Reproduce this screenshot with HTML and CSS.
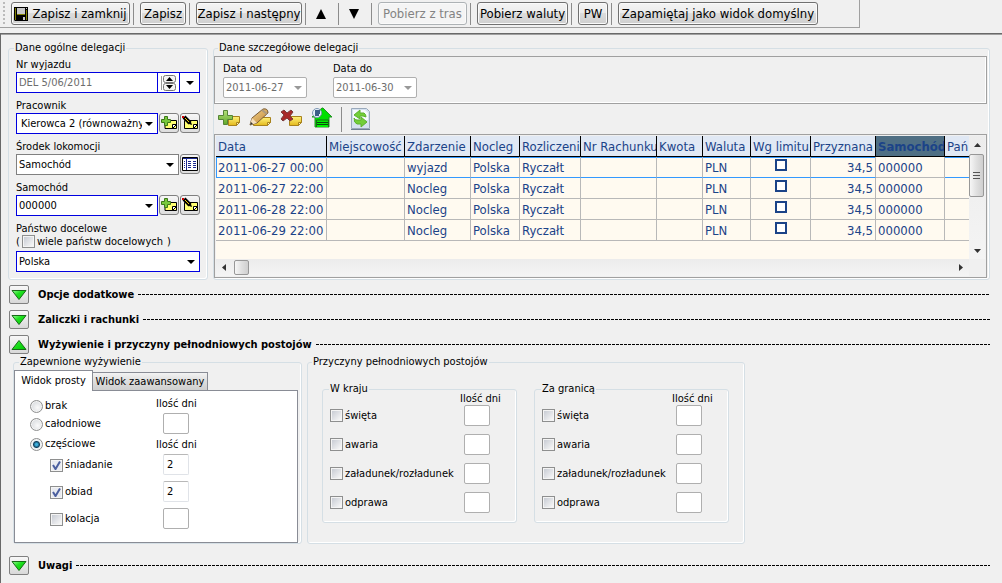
FILE: index.html
```html
<!DOCTYPE html>
<html lang="pl">
<head>
<meta charset="utf-8">
<title>Delegacja</title>
<link rel="stylesheet" href="styles.css">
</head>
<body>
<svg class="defs" width="0" height="0" aria-hidden="true">
  <defs>
    <linearGradient id="gold" x1="0" y1="0" x2="0" y2="1"><stop offset="0" stop-color="#fff27a"/><stop offset="1" stop-color="#e3b81c"/></linearGradient>
    <linearGradient id="lime" x1="0" y1="0" x2="0" y2="1"><stop offset="0" stop-color="#b4e07a"/><stop offset="1" stop-color="#5fa828"/></linearGradient>
    <linearGradient id="wood" x1="0" y1="0" x2="1" y2="1"><stop offset="0" stop-color="#f6d58e"/><stop offset="1" stop-color="#bd8434"/></linearGradient>
    <linearGradient id="green" x1="0" y1="0" x2="1" y2="1"><stop offset="0" stop-color="#9f9"/><stop offset=".4" stop-color="#1fe01f"/><stop offset="1" stop-color="#00c800"/></linearGradient>
    <symbol id="note-add" viewBox="0 0 16 16"><path d="M4 5.500h11.500v8H4z" fill="#ffff70" stroke="#000"/><path d="M11.500 13.500v-4h4z" fill="#fff" stroke="#000"/><path d="M12 13l3-3" stroke="#000"/><path d="M3.500 1.500h3v3h3v3h-3v3h-3v-3h-3v-3h3z" fill="#78c83c" stroke="#3c7818"/></symbol>
    <symbol id="note-edit" viewBox="0 0 16 16"><path d="M2.500 5.500h13v8h-13z" fill="#ffff70" stroke="#000"/><path d="M11.500 13.500v-4h4z" fill="#fff" stroke="#000"/><path d="M12 13l3-3" stroke="#000"/><path d="m2 2 6 6" stroke="#000" stroke-width="4"/><path d="m3 3 4 4" stroke="#f4d000"/><path d="M0 1h2v2H0z" fill="#d00000"/><path d="M10 10 5.500 8.500 8.500 5.500z" fill="#000"/></symbol>
    <symbol id="down" viewBox="0 0 16 12"><path d="M1 1.500h14L8 10.500z" fill="url(#green)" stroke="#176a17"/></symbol>
    <symbol id="up" viewBox="0 0 16 12"><path d="M1 10.500h14L8 1.500z" fill="url(#green)" stroke="#176a17"/></symbol>
  </defs>
</svg>

<header class="toolbar">
  <span class="grip"></span>
  <button class="btn btn-save" type="button"><svg width="14" height="14" viewBox="0 0 14 14"><path d="M0 0h14v14H1L0 13z" fill="#000"/><path d="M1 1h1v12H1zM12 3h1v10h-1zM3 7h8v1H3z" fill="#808000"/><path d="M3 1h8v6H3zM12 1h1v1h-1z" fill="#c8c8c8"/><path d="M9 10h2v3H9z" fill="#c8c8c8"/></svg>Zapisz i zamknij</button>
  <span class="sep"></span>
  <button class="btn" type="button">Zapisz</button>
  <span class="sep"></span>
  <button class="btn btn-next" type="button">Zapisz i następny</button>
  <span class="sep"></span>
  <button class="arrow" type="button" aria-label="Poprzedni"><svg width="10" height="10" viewBox="0 0 10 10"><path d="M5 0 10 10H0z"/></svg></button>
  <span class="sep"></span>
  <button class="arrow" type="button" aria-label="Następna"><svg width="10" height="10" viewBox="0 0 10 10"><path d="M0 0h10L5 10z"/></svg></button>
  <span class="sep"></span>
  <button class="btn btn-routes" type="button" disabled>Pobierz z tras</button>
  <span class="sep"></span>
  <button class="btn btn-rates" type="button">Pobierz waluty</button>
  <span class="sep"></span>
  <button class="btn btn-pw" type="button">PW</button>
  <span class="sep"></span>
  <button class="btn btn-view" type="button">Zapamiętaj jako widok domyślny</button>
</header>

<main class="main">
  <div class="top">
    <fieldset class="group general">
      <legend>Dane ogólne delegacji</legend>
      <div class="field">
        <label for="nr">Nr wyjazdu</label>
        <div class="line joined">
          <input class="box blue number" id="nr" value="DEL 5/06/2011" readonly>
          <button class="spin" type="button" aria-label="Zmień numer"><svg width="15" height="16" viewBox="0 0 15 16"><path d="M.5 1v14" stroke="#999"/><rect x="2.500" y=".5" width="12" height="7" rx="2" fill="#f4f4f4" stroke="#777"/><rect x="2.500" y="8.500" width="12" height="7" rx="2" fill="#f4f4f4" stroke="#777"/><path d="M8.500 2 12 6H5zM8.500 14 5 10h7z"/></svg></button>
          <button class="drop" type="button" aria-label="Rozwiń"><svg width="8" height="4" viewBox="0 0 8 4"><path d="M0 0h8L4 4z"/></svg></button>
        </div>
      </div>
      <div class="field">
        <label for="worker">Pracownik</label>
        <div class="line">
          <select class="box blue indent" id="worker"><option>Kierowca 2 (równoważny)</option></select>
          <button class="tool" type="button" aria-label="Dodaj pracownika"><svg width="16" height="16"><use href="#note-add"/></svg></button>
          <button class="tool" type="button" aria-label="Edytuj pracownika"><svg width="16" height="16"><use href="#note-edit"/></svg></button>
        </div>
      </div>
      <div class="field">
        <label for="transport">Środek lokomocji</label>
        <div class="line">
          <select class="box" id="transport"><option>Samochód</option></select>
          <button class="tool" type="button" aria-label="Lista"><svg width="16" height="14" viewBox="0 0 16 14"><path d="M.5.500h15v13H.5z" fill="#fff" stroke="#000"/><path d="M1 1h14v1H1z" fill="#1c2a90"/><path d="M4.500 2v11" stroke="#1c2a90"/><path d="M2 4.500h1M2 6.500h1M2 8.500h1M2 10.500h1M6 4.500h3M6 6.500h3M6 8.500h3M6 10.500h3M11 4.500h3M11 6.500h3M11 8.500h3M11 10.500h3" stroke="#1c2a90"/></svg></button>
        </div>
      </div>
      <div class="field">
        <label for="car">Samochód</label>
        <div class="line">
          <select class="box blue" id="car"><option>000000</option></select>
          <button class="tool" type="button" aria-label="Dodaj samochód"><svg width="16" height="16"><use href="#note-add"/></svg></button>
          <button class="tool" type="button" aria-label="Edytuj samochód"><svg width="16" height="16"><use href="#note-edit"/></svg></button>
        </div>
      </div>
      <div class="field">
        <label for="country">Państwo docelowe</label>
        <div class="many">(<label class="check"><input type="checkbox">wiele państw docelowych</label><span class="paren">)</span></div>
        <div class="line"><select class="box blue" id="country"><option>Polska</option></select></div>
      </div>
    </fieldset>

    <fieldset class="group details">
      <legend>Dane szczegółowe delegacji</legend>
      <div class="dates">
        <div class="date"><label for="from">Data od</label><select class="box" id="from" disabled><option>2011-06-27</option></select></div>
        <div class="date"><label for="to">Data do</label><select class="box" id="to" disabled><option>2011-06-30</option></select></div>
      </div>
      <div class="actions">
        <button type="button" aria-label="Dodaj"><svg width="24" height="24" viewBox="0 0 24 24"><path d="M11.500 9.500h11v6l-3 3h-8z" fill="url(#gold)" stroke="#a8821c"/><path d="M19.500 18.500v-3h3z" fill="#fff8b0" stroke="#a8821c"/><path d="M6.500 3.500h4v5h5v4h-5v5h-4v-5h-5v-4h5z" fill="url(#lime)" stroke="#558436"/></svg></button>
        <button type="button" aria-label="Edytuj"><svg width="24" height="24" viewBox="0 0 24 24"><path d="M5.500 10.500h17v5l-3 3h-14z" fill="url(#gold)" stroke="#a8821c"/><path d="M19.500 18.500v-3h3z" fill="#fff8b0" stroke="#a8821c"/><path d="m2 18 2-7L15 2q5-1 5 4L9 16z" fill="url(#wood)" stroke="#795b35"/><path d="m4 11 5 5-7 2z" fill="#f5dfbd"/><path d="m14 3 5 4" stroke="#ad9a7e" stroke-width="2"/><path d="m2 18 1-3 2 2z" fill="#333"/></svg></button>
        <button type="button" aria-label="Usuń"><svg width="24" height="24" viewBox="0 0 24 24"><path d="M10.500 9.500h12v6l-3 3h-9z" fill="url(#gold)" stroke="#a8821c"/><path d="M19.500 18.500v-3h3z" fill="#fff8b0" stroke="#a8821c"/><path d="m2 5 3-2 3 3 4-3 2 2-3 4 3 3-3 2-3-3-4 3-2-2 3-4z" fill="#a82a2a" stroke="#7b3b3b"/></svg></button>
        <button type="button" aria-label="Baza"><svg width="24" height="24" viewBox="0 0 24 24"><path d="M12 1h1l9 9h-3v10H5V10H2z" fill="#00df00" stroke="#249124"/><path d="M6.500 20v-7h12v7" fill="#00f000" stroke="#176c17"/><path d="M7 15.500h11M7 17.500h11" stroke="#08480e"/><circle cx="7" cy="6" r="4.500" fill="#e8f2fa" stroke="#7e96b3"/><path d="M5 4h4v2H6v2h3" fill="none" stroke="#3b5e86" stroke-width="2"/></svg></button>
        <span class="divider"></span>
        <button type="button" aria-label="Odśwież"><svg width="24" height="24" viewBox="0 0 24 24"><path d="M2.500 1.500h15l3 3v17h-18z" fill="#d6e2f0" stroke="#9aa9bb"/><path d="M4 3h12l3 3v7H4z" fill="#f7faff"/><path d="M2 22.500h19" stroke="#6f7f92"/><path d="m5 8 6-5v3h4q2 1 2 4l-3-1h-3v3z" fill="#73cf39" stroke="#5cb030"/><path d="m18 15-6-5v3H8q-2 0-3-2 0 5 3 6h4v3z" fill="#73cf39" stroke="#5cb030"/></svg></button>
      </div>
      <div class="grid">
        <div class="viewport">
          <table>
            <colgroup><col class="c1"><col class="c2"><col class="c3"><col class="c4"><col class="c5"><col class="c6"><col class="c7"><col class="c8"><col class="c9"><col class="c10"><col class="c11"><col class="c12"></colgroup>
            <thead><tr><th>Data</th><th>Miejscowość</th><th>Zdarzenie</th><th>Nocleg</th><th>Rozliczenie</th><th>Nr Rachunku</th><th>Kwota</th><th>Waluta</th><th>Wg limitu</th><th>Przyznana</th><th class="sorted">Samochód</th><th>Pań</th></tr></thead>
            <tbody>
              <tr class="current"><td>2011-06-27 00:00</td><td></td><td>wyjazd</td><td>Polska</td><td>Ryczałt</td><td></td><td></td><td>PLN</td><td class="tick"><input type="checkbox" aria-label="Wg limitu"></td><td class="num">34,5</td><td class="car">000000</td><td></td></tr>
              <tr><td>2011-06-27 22:00</td><td></td><td>Nocleg</td><td>Polska</td><td>Ryczałt</td><td></td><td></td><td>PLN</td><td class="tick"><input type="checkbox" aria-label="Wg limitu"></td><td class="num">34,5</td><td>000000</td><td></td></tr>
              <tr><td>2011-06-28 22:00</td><td></td><td>Nocleg</td><td>Polska</td><td>Ryczałt</td><td></td><td></td><td>PLN</td><td class="tick"><input type="checkbox" aria-label="Wg limitu"></td><td class="num">34,5</td><td>000000</td><td></td></tr>
              <tr><td>2011-06-29 22:00</td><td></td><td>Nocleg</td><td>Polska</td><td>Ryczałt</td><td></td><td></td><td>PLN</td><td class="tick"><input type="checkbox" aria-label="Wg limitu"></td><td class="num">34,5</td><td>000000</td><td></td></tr>
            </tbody>
          </table>
        </div>
        <div class="vbar">
          <button type="button" aria-label="W górę"><svg width="7" height="4" viewBox="0 0 7 4"><path d="M3.500 0 7 4H0z" fill="#333"/></svg></button>
          <span class="thumb"><svg width="8" height="9" viewBox="0 0 8 9"><path d="M0 1.500h7M0 4.500h7M0 7.500h7" stroke="#555"/></svg></span>
          <button class="last" type="button" aria-label="W dół"><svg width="7" height="4" viewBox="0 0 7 4"><path d="M0 0h7L3.500 4z" fill="#333"/></svg></button>
        </div>
        <div class="hbar">
          <button type="button" aria-label="W lewo"><svg width="4" height="7" viewBox="0 0 4 7"><path d="M4 0v7L0 3.500z" fill="#333"/></svg></button>
          <span class="thumb"></span>
          <button class="last" type="button" aria-label="W prawo"><svg width="4" height="7" viewBox="0 0 4 7"><path d="M0 0v7l4-3.500z" fill="#333"/></svg></button>
        </div>
      </div>
    </fieldset>
  </div>

  <div class="sections">
    <div class="section"><button class="fold" type="button" aria-label="Rozwiń"><svg width="16" height="12"><use href="#down"/></svg></button><h2>Opcje dodatkowe</h2><span class="dashes"></span></div>
    <div class="section"><button class="fold" type="button" aria-label="Rozwiń"><svg width="16" height="12"><use href="#down"/></svg></button><h2>Zaliczki i rachunki</h2><span class="dashes"></span></div>
    <div class="section"><button class="fold" type="button" aria-label="Zwiń"><svg width="16" height="12"><use href="#up"/></svg></button><h2>Wyżywienie i przyczyny pełnodniowych postojów</h2><span class="dashes"></span></div>
  </div>

  <div class="meals">
    <fieldset class="group board">
      <legend>Zapewnione wyżywienie</legend>
      <div class="tabs"><button class="tab active" type="button">Widok prosty</button><button class="tab" type="button">Widok zaawansowany</button></div>
      <div class="pane">
        <div class="kinds">
          <label class="check"><input type="radio" name="meal">brak</label>
          <label class="check"><input type="radio" name="meal">całodniowe</label>
          <label class="check part"><input type="radio" name="meal" checked>częściowe</label>
          <label class="check sub"><input type="checkbox" checked>śniadanie</label>
          <label class="check sub"><input type="checkbox" checked>obiad</label>
          <label class="check sub"><input type="checkbox">kolacja</label>
        </div>
        <div class="days">
          <label for="full">Ilość dni</label>
          <input class="qty" id="full">
          <label for="breakfast">Ilość dni</label>
          <input class="qty live" id="breakfast" value="2">
          <input class="qty live" aria-label="Obiad" value="2">
          <input class="qty" aria-label="Kolacja">
        </div>
      </div>
    </fieldset>

    <fieldset class="group stops">
      <legend>Przyczyny pełnodniowych postojów</legend>
      <div class="places">
        <fieldset class="group place">
          <legend>W kraju</legend>
          <div class="reasons">
            <span class="caption">Ilość dni</span>
            <label class="check"><input type="checkbox">święta</label><input class="qty" aria-label="święta">
            <label class="check"><input type="checkbox">awaria</label><input class="qty" aria-label="awaria">
            <label class="check"><input type="checkbox">załadunek/rozładunek</label><input class="qty" aria-label="załadunek/rozładunek">
            <label class="check"><input type="checkbox">odprawa</label><input class="qty" aria-label="odprawa">
          </div>
        </fieldset>
        <fieldset class="group place">
          <legend>Za granicą</legend>
          <div class="reasons">
            <span class="caption">Ilość dni</span>
            <label class="check"><input type="checkbox">święta</label><input class="qty" aria-label="święta">
            <label class="check"><input type="checkbox">awaria</label><input class="qty" aria-label="awaria">
            <label class="check"><input type="checkbox">załadunek/rozładunek</label><input class="qty" aria-label="załadunek/rozładunek">
            <label class="check"><input type="checkbox">odprawa</label><input class="qty" aria-label="odprawa">
          </div>
        </fieldset>
      </div>
    </fieldset>
  </div>

  <div class="section notes"><button class="fold" type="button" aria-label="Rozwiń"><svg width="16" height="12"><use href="#down"/></svg></button><h2>Uwagi</h2><span class="dashes"></span></div>
</main>
</body>
</html>
```
FILE: styles.css
```css
* { box-sizing: border-box; }
html { overflow: hidden; }
body {
  margin: 0;
  background: #f0f0f0;
  color: #000;
  font: 11px/16px "DejaVu Sans Condensed", "DejaVu Sans", sans-serif;
}
button, input, select { font: inherit; color: inherit; margin: 0; }
button { display: inline-flex; align-items: center; justify-content: center; padding: 0; }
svg { display: block; flex: none; }
.defs { position: absolute; }

.toolbar {
  display: flex;
  align-items: center;
  width: fit-content;
  height: 28px;
  padding: 0 41px 0 3px;
  border: solid #a0a0a0;
  border-width: 0 1px 1px 0;
  font-size: 13px;
}
.grip {
  width: 2px;
  height: 23px;
  margin-right: 6px;
  background: repeating-linear-gradient(#bbb 0 2px, transparent 2px 4px);
}
.btn {
  height: 23px;
  min-width: 46px;
  white-space: nowrap;
  background: linear-gradient(#f4f4f4, #ebebeb 50%, #dcdcdc 50%, #cfcfcf);
  border: 1px solid #707070;
  border-radius: 3px;
  box-shadow: inset 0 0 0 1px #fafafa;
}
.btn:disabled { color: #838383; background: #f4f4f4; border-color: #adb2b5; }
.btn-save { width: 119px; gap: 4px; }
.btn-next { width: 106px; }
.btn-routes { width: 89px; }
.btn-rates { width: 91px; }
.btn-pw { width: 30px; min-width: 0; }
.btn-view { width: 200px; }
.sep { width: 1px; height: 22px; margin: 0 6px 0 3px; background: #8c8c8c; }
.arrow { width: 23px; height: 23px; padding-right: 5px; border: 0; background: none; }

.main {
  margin-top: 5px;
  min-height: calc(100vh - 33px);
  padding: 5px 12px 0 7px;
  border: solid #696969;
  border-width: 1px 0 0 1px;
  box-shadow: inset 0 1px #a0a0a0;
}
.group {
  min-width: 0;
  margin: 0;
  padding: 0;
  border: 1px solid #d5dfe5;
  border-radius: 3px;
  box-shadow: inset -1px -1px #fff;
}
.group legend { margin-left: 5px; padding: 0 1px; }
.top { display: grid; grid-template-columns: 200px 1fr; gap: 5px; padding-top: 1px; }

.general { padding: 0 7px 7px; }
.general legend { margin-left: -2px; }
.field { margin-bottom: 4px; }
.field:last-child { margin-bottom: 0; }
.field > label { display: block; height: 16px; padding-top: 1px; }
.line { display: flex; gap: 1px; height: 21px; }
.joined { gap: 0; }
.box {
  flex: 1;
  min-width: 0;
  height: 21px;
  padding: 0 18px 0 2px;
  border: 1px solid #808080;
  border-radius: 0;
  appearance: none;
  background: #fff url("data:image/svg+xml,%3Csvg xmlns='http://www.w3.org/2000/svg' width='8' height='4'%3E%3Cpath d='M0 0h8L4 4z'/%3E%3C/svg%3E") no-repeat right 4px center;
}
.blue { border-color: #0000e0; }
.indent { padding: 0 15px 0 4px; }
.number { background: #fff; padding-right: 2px; color: #6d6d6d; }
.spin { width: 21px; background: #fff; border: solid #0000e0; border-width: 1px 0; }
.drop { width: 21px; background: #fff; border: 1px solid #0000e0; }
.tool {
  width: 20px;
  height: 20px;
  border: 1px solid #808080;
  border-radius: 3px;
  background: linear-gradient(#f6f6f6, #ddd);
}
.many { display: flex; height: 15px; align-items: center; gap: 2px; margin-top: -2px; margin-bottom: 2px; }
.paren { margin-left: 2px; }
.check { display: flex; align-items: center; gap: 2px; white-space: nowrap; }
.check input { flex: none; width: 13px; height: 13px; appearance: none; }
.check input[type="checkbox"] {
  border: 1px solid #8e8f8f;
  background: linear-gradient(135deg, #c8ccd4, #f8f8f8) content-box, #f6f6f6;
  padding: 1px;
  box-shadow: inset 0 0 0 1px #f4f4f4;
}
.check input[type="checkbox"]:checked {
  background: url("data:image/svg+xml,%3Csvg xmlns='http://www.w3.org/2000/svg' width='11' height='11'%3E%3Cpath d='M2 5l2.500 4L9 1.500' fill='none' stroke='%234b5f9f' stroke-width='2'/%3E%3C/svg%3E") no-repeat center, #e8eaf0;
}
.check input[type="radio"] {
  border: 1px solid #8e8f8f;
  border-radius: 50%;
  background: radial-gradient(circle at 60% 60%, #fafafa, #cdd1d6);
  box-shadow: inset 0 0 0 1px #f4f4f4;
}
.check input[type="radio"]:checked { background: radial-gradient(circle, #3fb0dc 0 1px, #10405f 3px, #e8eef2 4px); }

.details { display: flex; flex-direction: column; padding: 0 2px 1px 0; }
.details legend { margin-left: 4px; }
.dates { display: flex; gap: 26px; height: 48px; padding: 4px 8px; border: 1px solid #a0a0a0; box-shadow: inset -1px -1px #fff; }
.date { display: flex; flex-direction: column; width: 84px; }
.date .box { flex: none; border-radius: 2px; }
.date .box:disabled {
  opacity: 1;
  color: #6d6d6d;
  border-color: #afafaf;
  background-image: url("data:image/svg+xml,%3Csvg xmlns='http://www.w3.org/2000/svg' width='8' height='4'%3E%3Cpath fill='%23999' d='M0 0h8L4 4z'/%3E%3C/svg%3E");
}
.actions { display: flex; align-items: center; gap: 7px; height: 30px; padding-left: 3px; }
.actions button { border: 0; background: none; }
.divider { width: 1px; height: 25px; background: #8c8c8c; }
.grid {
  flex: 1;
  display: grid;
  grid-template: 1fr 17px / minmax(0, 1fr) 16px;
  min-height: 144px;
  padding: 1px;
  border: 1px solid #a0a0a0;
  background: #f0f0f0;
}
.viewport { overflow: hidden; background: #fffaf0; }
table { width: 790px; table-layout: fixed; border-collapse: separate; border-spacing: 0; color: #1b4388; font-size: 13px; }
th, td { height: 21px; padding: 2px 2px 0; overflow: hidden; white-space: nowrap; text-align: left; font-weight: normal; line-height: 18px; border: solid #b8b8b8; border-width: 0 1px 1px 0; }
th { padding-right: 0; background: #e0e8f4; border-color: #000; }
.sorted { background: #4f6f84; font-weight: bold; }
.current td { border-bottom-color: #3399ff; box-shadow: inset 0 1px #3399ff; }
.current td:first-child { box-shadow: inset 1px 1px #3399ff; }
.current .car { box-shadow: none; border-bottom-color: #b8b8b8; }
.num { text-align: right; }
.tick { padding-top: 0; text-align: center; }
.tick input { display: block; width: 12px; height: 12px; margin: 0 auto 4px; appearance: none; border: 2px solid #1b4388; background: #fff; }
.c1 { width: 111px; } .c2 { width: 78px; } .c3 { width: 66px; } .c4 { width: 49px; }
.c5 { width: 61px; } .c6 { width: 76px; } .c7 { width: 46px; } .c8 { width: 48px; }
.c9 { width: 60px; } .c10 { width: 65px; } .c11 { width: 69px; } .c12 { width: 61px; }
.vbar, .hbar { display: flex; background: linear-gradient(#ececec, #f4f4f4); }
.vbar { flex-direction: column; }
.vbar button, .hbar button { border: 0; background: none; width: 16px; height: 17px; }
.thumb { display: flex; align-items: center; justify-content: center; width: 15px; height: 15px; margin: 1px 2px; border: 1px solid #979797; border-radius: 2px; background: linear-gradient(90deg, #f6f6f6, #e0e0e0 50%, #cfcfcf); }
.vbar .thumb { height: 43px; margin: 1px 0; }
.vbar .last { margin-top: auto; }
.hbar .last { margin-left: auto; }

.section { display: flex; align-items: center; height: 25px; }
.sections { padding-top: 2px; }
.section h2 { margin: 0 4px 0 9px; font-size: 11px; font-weight: bold; }
.fold { width: 20px; height: 19px; margin-left: 1px; border: 1px solid #808080; border-radius: 2px; background: linear-gradient(#f8f8f8, #d8d8d8); }
.dashes { flex: 1; height: 1px; background: repeating-linear-gradient(90deg, #000 0 3px, transparent 3px 4px); }

.meals { display: grid; grid-template-columns: 289px 438px; gap: 5px; margin-top: -3px; padding-left: 5px; }
.tabs { display: flex; align-items: flex-end; height: 20px; }
.tab { height: 18px; width: 115px; border: 1px solid #898c95; border-width: 1px 1px 0 0; background: linear-gradient(#f2f2f2, #ddd 50%, #cfcfcf); }
.tab.active { z-index: 1; width: 79px; height: 21px; margin-bottom: -1px; border-width: 1px 1px 0; background: #fff; }
.board { padding: 0 3px 0 0; }
.pane { display: grid; grid-template-columns: 126px 1fr; height: 153px; border: 1px solid #898c95; background: #fff; padding: 4px 0 0 15px; }
.kinds { display: flex; flex-direction: column; padding-top: 2px; }
.kinds .check { height: 18px; }
.kinds .part { height: 22px; }
.kinds .sub { height: 20px; margin-bottom: 7px; padding-left: 20px; }
.days { display: flex; flex-direction: column; }
.days label { height: 16px; margin-bottom: 2px; padding-top: 1px; }
.qty { width: 26px; height: 21px; padding: 0 3px; border: 1px solid #afafaf; border-radius: 2px; background: #fff; }
.days .qty { margin-left: 7px; margin-bottom: 6px; }
.days #full { margin-bottom: 2px; }
.days .live { border-color: #b8b8b8 #e0e3e8 #e0e3e8; }
.stops { padding: 11px 15px 20px 14px; }
.stops > legend { margin-left: -10px; }
.places { display: grid; grid-template-columns: 195px 195px; gap: 17px; }
.place legend { margin-left: 6px; }
.reasons { display: grid; grid-template-columns: 134px 1fr; row-gap: 8px; padding: 0 0 9px 7px; align-items: center; }
.reasons .caption { grid-column: 2; height: 8px; margin: -2px 0 -6px -4px; line-height: 8px; }
.notes { margin-top: 9px; }
```
